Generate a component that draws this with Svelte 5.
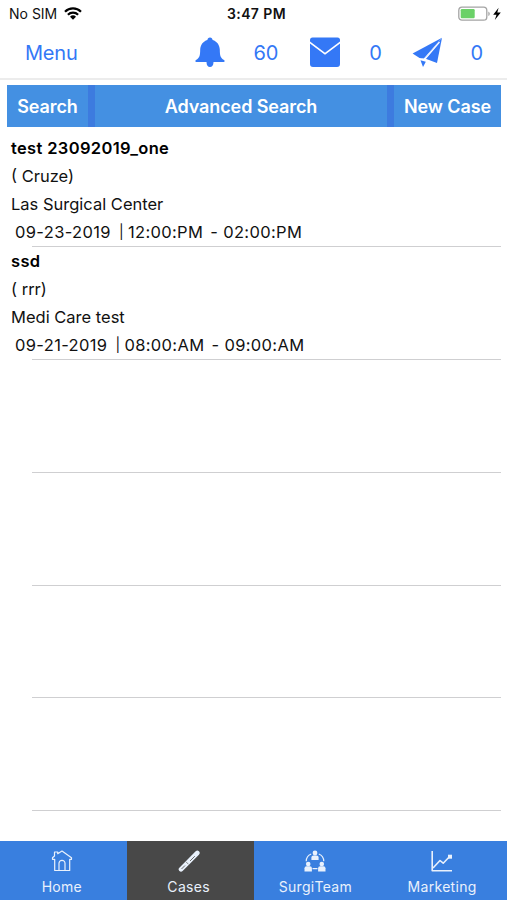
<script lang="ts">
	interface Case {
		title: string;
		doctor: string;
		facility: string;
		date: string;
		start: string;
		end: string;
	}

	const cases: Case[] = [
		{
			title: 'test 23092019_one',
			doctor: '( Cruze)',
			facility: 'Las Surgical Center',
			date: '09-23-2019',
			start: '12:00:PM',
			end: '02:00:PM'
		},
		{
			title: 'ssd',
			doctor: '( rrr)',
			facility: 'Medi Care test',
			date: '09-21-2019',
			start: '08:00:AM',
			end: '09:00:AM'
		}
	];
	const emptyRows = [0, 1, 2, 3];
	const tabs = ['Home', 'Cases', 'SurgiTeam', 'Marketing'];

	let activeTab = $state('Cases');
</script>

<div class="screen">
	<div class="status-bar">
		<div class="carrier">
			<span>No SIM</span>
			<svg width="18" height="13" viewBox="0 0 18 13">
				<g fill="none" stroke="#000" stroke-width="2.2">
					<path d="M1 4.7a11.3 11.3 0 0 1 16 0" />
					<path d="M3.9 7.7a7.2 7.2 0 0 1 10.2 0" />
				</g>
				<path d="M9 12.8 6 9.7a4.3 4.3 0 0 1 6 0z" />
			</svg>
		</div>
		<span class="time">3:47 PM</span>
		<svg class="battery" width="44" height="16" viewBox="0 0 44 16">
			<rect x=".8" y="1.2" width="28" height="13" rx="3.2" fill="#fff" stroke="#a4a4a4" stroke-width="1.3" />
			<rect x="2.7" y="3.1" width="14" height="9.2" rx="1.2" fill="#6bd168" />
			<path d="M30.3 5.5a2.5 2.5 0 0 1 0 4.6z" fill="#a4a4a4" />
			<path d="m40.6 1.7-5.4 7h3.3l-1.7 5.2 6-7.3h-3.5z" />
		</svg>
	</div>

	<header class="nav-bar">
		<button class="menu">Menu</button>
		<svg class="bell" width="30" height="31" viewBox="0 0 30 31">
			<path d="M15 .5c1.6 0 2.4 1 2.6 2.4C22 4.2 24.7 8 24.8 12.5c.1 6 .5 8.5 4.2 10.4.9.5.9 2.1-.3 2.1H18.5c0 3.4-1.4 5-3.5 5s-3.5-1.6-3.5-5H1.3C.1 25 .1 23.4 1 22.9c3.7-1.9 4.1-4.4 4.2-10.4C5.3 8 8 4.2 12.4 2.9 12.6 1.5 13.4.5 15 .5z" />
		</svg>
		<span class="count bell-count">60</span>
		<svg width="30" height="31" viewBox="0 0 30 31">
			<path d="M2.5.5h25Q30 .5 30 3v1.6L15 15.8 0 4.6V3Q0 .5 2.5.5z" />
			<path d="M0 6.6 15 17.7 30 6.6V27q0 3-3 3H3q-3 0-3-3z" />
		</svg>
		<span class="count mail-count">0</span>
		<svg width="31" height="31" viewBox="0 0 31 31">
			<path d="M30 .8.6 16.5l7.7 5.1 2.8-.9z" />
			<path d="M30 .8 25 26l-12-4.5z" />
			<path d="m8.500 23.300 5.300 1.400-2.800 5.300z" />
			<path d="M30 .8 8.300 21.600l3.500-.2z" />
			<path d="M27.500 5 12.600 22.700 7 21.500" fill="none" stroke="#fff" stroke-width="1.200" />
		</svg>
		<span class="count plane-count">0</span>
	</header>

	<div class="toolbar">
		<button>Search</button>
		<button>Advanced Search</button>
		<button>New Case</button>
	</div>

	<main class="case-list">
		{#each cases as item (item.title)}
			<div class="case-row">
				<div class="title">{item.title}</div>
				<div>{item.doctor}</div>
				<div>{item.facility}</div>
				<div class="schedule">
					<span>{item.date}</span>
					<span class="divider">|</span>
					<span class="start">{item.start}</span>
					<span>- {item.end}</span>
				</div>
			</div>
		{/each}
		{#each emptyRows as row (row)}
			<div class="case-row"></div>
		{/each}
	</main>

	<nav class="tab-bar">
		{#each tabs as tab (tab)}
			<button class:active={activeTab === tab} onclick={() => (activeTab = tab)}>
				<svg width="22" height="22" viewBox="0 0 22 22">
					{#if tab === 'Home'}
						<path d="M1.5 9.3V7.7l2-1.7V2h3.2v1.7L11 1l9.5 6.7v1.6h-1.8v11.2h-15V9.3z" />
						<path d="M8 20.3v-7a3 3 0 0 1 6 0v7" />
					{:else if tab === 'Cases'}
						<path d="M3 19.3 19.3 3" stroke-width="4.6" stroke-linecap="round" />
						<path d="m12 11 4.800-4.800M3.500 19l3.500-3.500" stroke="#6c6c6c" stroke-width="1" />
						<path d="m8 11.800 2.500 2.500" stroke="#6c6c6c" stroke-width=".8" />
					{:else if tab === 'SurgiTeam'}
						<path d="M7.200 4C4 5.200 2.300 8 2.200 11.300M14.800 4c3.200 1.200 4.900 4 5 7.300M8.500 18.700h5" stroke-width="1.200" />
						<g fill="currentColor" stroke="none">
							<circle cx="11" cy="3" r="2.4" />
							<path d="M7.400 10V7.400q0-2 2-2h3.200q2 0 2 2V10z" />
							<circle cx="4.2" cy="14" r="2.3" />
							<path d="M.5 21.500v-3.200q0-2 2-2h3.400q2 0 2 2v3.200z" />
							<circle cx="17.8" cy="14" r="2.3" />
							<path d="M14.100 21.500v-3.200q0-2 2-2h3.400q2 0 2 2v3.200z" />
						</g>
					{:else}
						<path d="M1.200 1v19.800H21" stroke-width="1.6" />
						<path d="m2 18 7-7.500 3.200 2.700 6.200-6.400" stroke-width="1.6" />
						<path d="M17 4.700h4v4h-4z" fill="currentColor" stroke="none" />
					{/if}
				</svg>
				<span>{tab}</span>
			</button>
		{/each}
	</nav>
</div>

<style>
	:global(body) {
		margin: 0;
		background: #fff;
	}
	.screen {
		display: flex;
		flex-direction: column;
		height: 900px;
		overflow: hidden;
		background: #fff;
		color: #111;
		font-family: Inter, 'Liberation Sans', sans-serif;
	}
	button {
		border: none;
		margin: 0;
		padding: 0;
		background: none;
		color: inherit;
		font: inherit;
		letter-spacing: inherit;
		cursor: pointer;
	}
	svg {
		flex: none;
	}
	.status-bar {
		display: grid;
		grid-template-columns: 1fr auto 1fr;
		align-items: center;
		height: 27px;
		padding: 0 5px 0 9px;
		font-size: 14px;
	}
	.carrier {
		display: flex;
		align-items: center;
		gap: 7px;
	}
	.time {
		padding-left: 2px;
		font-weight: 600;
		letter-spacing: 0.4px;
	}
	.battery {
		justify-self: end;
	}
	.nav-bar {
		display: flex;
		align-items: center;
		box-sizing: border-box;
		height: 53px;
		padding: 1px 24px 0 25px;
		border-bottom: 2px solid #ececec;
		color: #3478f6;
		font-size: 20px;
		letter-spacing: -0.2px;
	}
	.nav-bar svg {
		margin-bottom: 2px;
		fill: #3478f6;
	}
	.bell {
		margin-left: auto;
	}
	.bell-count {
		margin: 0 32px 0 29px;
	}
	.mail-count {
		margin: 0 30px 0 29px;
	}
	.plane-count {
		margin-left: 28px;
	}
	.toolbar {
		display: grid;
		grid-template-columns: 81px 292px 107px;
		gap: 7px;
		height: 42px;
		margin: 5px 6px 0 7px;
		background: #3d7bdf;
		color: #fff;
		font-size: 18px;
		font-weight: 600;
		letter-spacing: -0.1px;
	}
	.toolbar button {
		background: #4490e2;
	}
	.case-list {
		flex: 1;
		padding-top: 7px;
		font-size: 16.5px;
	}
	.case-row {
		position: relative;
		height: 112.9px;
		padding-left: 11px;
		line-height: 28.1px;
		white-space: nowrap;
	}
	.case-row::after {
		content: '';
		position: absolute;
		left: 32px;
		right: 6px;
		bottom: 0;
		height: 1px;
		background: #cfcfd1;
	}
	.title {
		color: #000;
		font-weight: 600;
		letter-spacing: 0.35px;
	}
	.schedule {
		display: flex;
		padding-left: 4px;
		letter-spacing: 0.35px;
	}
	.divider {
		margin: 0 4px 0 8px;
		font-size: 14px;
	}
	.start {
		margin-right: 7px;
	}
	.tab-bar {
		display: grid;
		grid-template-columns: repeat(4, 1fr);
		height: 59px;
		background: #397fdf;
		color: #e9f1fc;
		font-size: 14px;
		letter-spacing: 0.3px;
	}
	.tab-bar button {
		display: flex;
		flex-direction: column;
		align-items: center;
		gap: 6px;
		padding: 9px 3px 0 0;
		line-height: 17px;
	}
	.tab-bar .active {
		background: #484848;
	}
	.tab-bar svg {
		fill: none;
		stroke: currentColor;
		stroke-width: 1.2;
		stroke-linejoin: round;
	}
</style>
